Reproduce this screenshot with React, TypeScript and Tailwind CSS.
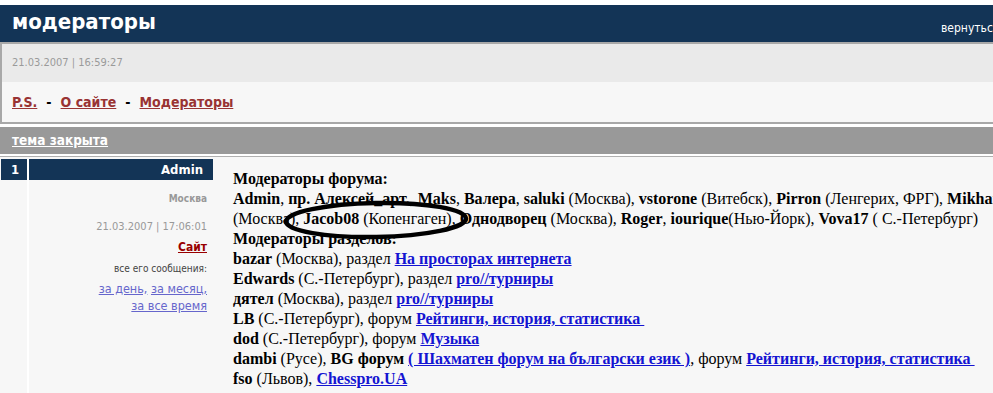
const sans = { fontFamily: '"DejaVu Sans Condensed", "Liberation Sans", sans-serif' }

const Link = ({ children }: { children: React.ReactNode }) => (
  <a href="#" className="font-bold text-[#1414d2] underline">
    {children}
  </a>
)

const App = () => {
  return (
    <div className="w-[993px] h-[393px] overflow-hidden bg-white">
      <div className="w-[1120px] pt-[5px]" style={sans}>
        <div className="h-[37px] bg-[#133456] flex items-end justify-between pl-3 pr-[52px]">
          <h1 className="text-[22px] font-bold text-white leading-none pb-[9px]">модераторы</h1>
          <span className="text-[12px] text-white pb-[5px]">вернуться на главную</span>
        </div>
        <div className="border-t-2 border-l-2 border-b-2 border-[#a8a8a8]">
          <div className="h-[38px] bg-[#eaeaea] flex items-center pl-[10px] text-[11px] text-[#9a9a9a]">
            21.03.2007 | 16:59:27
          </div>
          <div className="h-[40px] bg-[#f7f7f7] flex items-center pl-[10px] text-[14px] font-bold gap-[9px]">
            <a href="#" className="text-[#993333] underline">P.S.</a>
            <span>-</span>
            <a href="#" className="text-[#993333] underline">О сайте</a>
            <span>-</span>
            <a href="#" className="text-[#993333] underline">Модераторы</a>
          </div>
        </div>
        <div className="mt-[3px] h-[27px] bg-[#999999] flex items-center pl-3">
          <a href="#" className="text-[13.5px] font-bold text-white underline">тема закрыта</a>
        </div>
        <div className="mt-[2px] border-t border-[#b0b0b0] pt-[2px] bg-[#f7f7f7] flex h-[240px]">
          <div className="w-[213px] flex shrink-0">
            <div className="w-[28px] ml-px border-r-2 border-white flex flex-col">
              <div className="h-[21px] bg-[#133456] text-white text-[13px] font-bold flex items-center pl-[10px]">1</div>
            </div>
            <div className="flex-1 flex flex-col items-end text-right">
              <div className="h-[21px] w-full bg-[#133456] text-white text-[13px] font-bold flex items-center justify-end pr-[10px]">
                Admin
              </div>
              <div className="pr-[6px] flex flex-col items-end">
                <div className="mt-[11px] text-[10px] font-bold text-[#999]">Москва</div>
                <div className="mt-[13px] text-[11px] text-[#999]">21.03.2007 | 17:06:01</div>
                <a href="#" className="mt-[2px] text-[12px] font-bold text-[#990000] underline">Сайт</a>
                <div className="mt-[5px] text-[10px] text-[#444]">все его сообщения:</div>
                <div className="mt-[4px] text-[12.5px] leading-[17px] text-[#6666cc]">
                  <a href="#" className="underline">за день,</a>{" "}
                  <a href="#" className="underline">за месяц,</a>
                  <br />
                  <a href="#" className="underline">за все время</a>
                </div>
              </div>
            </div>
          </div>
          <div
            className="relative pl-[20px] pt-[10px] text-[16px] leading-[20px] text-black whitespace-nowrap"
            style={{ fontFamily: '"Liberation Serif", serif' }}
          >
            <b>Модераторы форума:</b>
            <br />
            <b>Admin</b>, <b>пр. Алексей_арт.</b>, <b>Maks</b>, <b>Валера</b>, <b>saluki</b> (Москва),{" "}
            <b>vstorone</b> (Витебск), <b>Pirron</b> (Ленгерих, ФРГ), <b>Mikhaill</b>
            <br />
            (Москва), <b>Jacob08</b> (Копенгаген), <b>Однодворец</b> (Москва), <b>Roger</b>, <b>iourique</b>
            (Нью-Йорк), <b>Vova17</b> ( С.-Петербург)
            <br />
            <b>Модераторы разделов:</b>
            <br />
            <b>bazar</b> (Москва), раздел <Link>На просторах интернета</Link>
            <br />
            <b>Edwards</b> (С.-Петербург), раздел <Link>pro//турниры</Link>
            <br />
            <b>дятел</b> (Москва), раздел <Link>pro//турниры</Link>
            <br />
            <b>LB</b> (С.-Петербург), форум <Link>Рейтинги, история, статистика&nbsp;</Link>
            <br />
            <b>dod</b> (С.-Петербург), форум <Link>Музыка</Link>
            <br />
            <b>dambi</b> (Русе), <b>BG форум</b> <Link>( Шахматен форум на български език )</Link>, форум{" "}
            <Link>Рейтинги, история, статистика&nbsp;</Link>
            <br />
            <b>fso</b> (Львов), <Link>Chesspro.UA</Link>
            <svg
              className="absolute left-[68px] top-[39px] pointer-events-none"
              width="190"
              height="44"
              viewBox="0 0 190 44"
            >
              <ellipse cx="95" cy="22" rx="90" ry="17" fill="none" stroke="black" strokeWidth="4.5" transform="rotate(-1 95 22)" />
            </svg>
          </div>
        </div>
      </div>
    </div>
  )
}

export default App
